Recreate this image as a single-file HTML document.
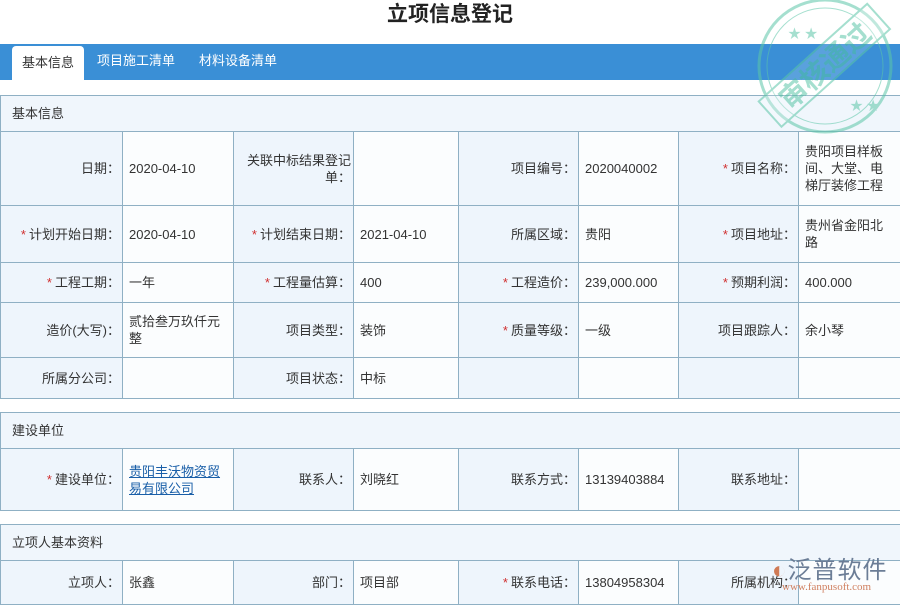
<!DOCTYPE html>
<html><head><meta charset="utf-8"><style>
*{margin:0;padding:0;box-sizing:border-box}
body{width:900px;height:600px;overflow:hidden;background:#fff;font-family:"Liberation Sans","Noto Sans CJK SC",sans-serif;font-size:13px;color:#333;position:relative}
h1{position:absolute;top:1px;left:0;width:900px;text-align:center;font-size:21px;font-weight:bold;color:#222;line-height:28px}
.bar{position:absolute;top:44px;left:0;width:900px;height:36px;background:#3a8fd6}
.tab{position:absolute;top:0;height:36px;line-height:34px;color:#fff;font-size:13px}
.tab.a{background:#fff;color:#333;top:2px;height:34px;border-radius:4px 4px 0 0;padding:0 10px;left:12px}
table{position:absolute;left:0;width:901px;border-collapse:collapse;table-layout:fixed}
td{border:1px solid #8fb0c4;padding:0 6px;line-height:17px;vertical-align:middle}
td.l{background:#eef5fc;text-align:right;padding-right:2px}
td.v{background:#fbfdfe}
td.h{background:#f0f6fc;padding-left:11px;text-align:left}
.s{color:#d03030;margin-right:3px}
a{color:#1a5fa8;text-decoration:underline}
.stamp{position:absolute;left:750px;top:-4px;width:150px;height:142px;opacity:.55}
.logo{position:absolute;left:772px;top:550px;font-size:24px;color:#6b7d96;letter-spacing:1px}
.logo small{display:block;font-size:11px;color:#d08060;margin-left:10px;margin-top:-4px;font-family:"Liberation Serif",serif;letter-spacing:0}
</style></head><body>
<h1>立项信息登记</h1>
<div class="bar"><div class="tab a">基本信息</div><div class="tab" style="left:97px">项目施工清单</div><div class="tab" style="left:199px">材料设备清单</div></div>
<table style="top:95px">
<colgroup><col style="width:122px"><col style="width:111px"><col style="width:120px"><col style="width:105px"><col style="width:120px"><col style="width:100px"><col style="width:120px"><col style="width:103px"></colgroup>
<tr style="height:36px"><td class="h" colspan="8">基本信息</td></tr>
<tr style="height:74px"><td class="l">日期：</td><td class="v">2020-04-10</td><td class="l">关联中标结果登记单：</td><td class="v"></td><td class="l">项目编号：</td><td class="v">2020040002</td><td class="l"><span class="s">*</span>项目名称：</td><td class="v">贵阳项目样板间、大堂、电梯厅装修工程</td></tr>
<tr style="height:57px"><td class="l"><span class="s">*</span>计划开始日期：</td><td class="v">2020-04-10</td><td class="l"><span class="s">*</span>计划结束日期：</td><td class="v">2021-04-10</td><td class="l">所属区域：</td><td class="v">贵阳</td><td class="l"><span class="s">*</span>项目地址：</td><td class="v">贵州省金阳北路</td></tr>
<tr style="height:40px"><td class="l"><span class="s">*</span>工程工期：</td><td class="v">一年</td><td class="l"><span class="s">*</span>工程量估算：</td><td class="v">400</td><td class="l"><span class="s">*</span>工程造价：</td><td class="v">239,000.000</td><td class="l"><span class="s">*</span>预期利润：</td><td class="v">400.000</td></tr>
<tr style="height:55px"><td class="l">造价(大写)：</td><td class="v">贰拾叁万玖仟元整</td><td class="l">项目类型：</td><td class="v">装饰</td><td class="l"><span class="s">*</span>质量等级：</td><td class="v">一级</td><td class="l">项目跟踪人：</td><td class="v">余小琴</td></tr>
<tr style="height:41px"><td class="l">所属分公司：</td><td class="v"></td><td class="l">项目状态：</td><td class="v">中标</td><td class="l"></td><td class="v"></td><td class="l"></td><td class="v"></td></tr>
</table>
<table style="top:412px">
<colgroup><col style="width:122px"><col style="width:111px"><col style="width:120px"><col style="width:105px"><col style="width:120px"><col style="width:100px"><col style="width:120px"><col style="width:103px"></colgroup>
<tr style="height:36px"><td class="h" colspan="8">建设单位</td></tr>
<tr style="height:62px"><td class="l"><span class="s">*</span>建设单位：</td><td class="v"><a>贵阳丰沃物资贸易有限公司</a></td><td class="l">联系人：</td><td class="v">刘晓红</td><td class="l">联系方式：</td><td class="v">13139403884</td><td class="l">联系地址：</td><td class="v"></td></tr>
</table>
<table style="top:524px">
<colgroup><col style="width:122px"><col style="width:111px"><col style="width:120px"><col style="width:105px"><col style="width:120px"><col style="width:100px"><col style="width:120px"><col style="width:103px"></colgroup>
<tr style="height:36px"><td class="h" colspan="8">立项人基本资料</td></tr>
<tr style="height:44px"><td class="l">立项人：</td><td class="v">张鑫</td><td class="l">部门：</td><td class="v">项目部</td><td class="l"><span class="s">*</span>联系电话：</td><td class="v">13804958304</td><td class="l">所属机构：</td><td class="v"></td></tr>
</table>
<svg class="stamp" viewBox="0 0 150 142"><g fill="none" stroke="#5cc6a8"><circle cx="75" cy="70" r="66" stroke-width="3"/><circle cx="75" cy="70" r="58" stroke-width="1"/></g><g transform="rotate(-42 75 70)"><rect x="2" y="52" width="146" height="34" fill="#fff" fill-opacity=".3" stroke="#5cc6a8" stroke-width="2"/><text x="75" y="80" text-anchor="middle" font-size="28" font-weight="bold" fill="#5cc6a8" font-family="Noto Sans CJK SC,sans-serif">审核通过</text></g><text x="38" y="42" fill="#5cc6a8" font-size="13">★ ★</text><text x="100" y="114" fill="#5cc6a8" font-size="13">★ ★</text></svg>
<div class="logo"><span style="color:#d07a55">◐</span>泛普软件<small>www.fanpusoft.com</small></div>
</body></html>
